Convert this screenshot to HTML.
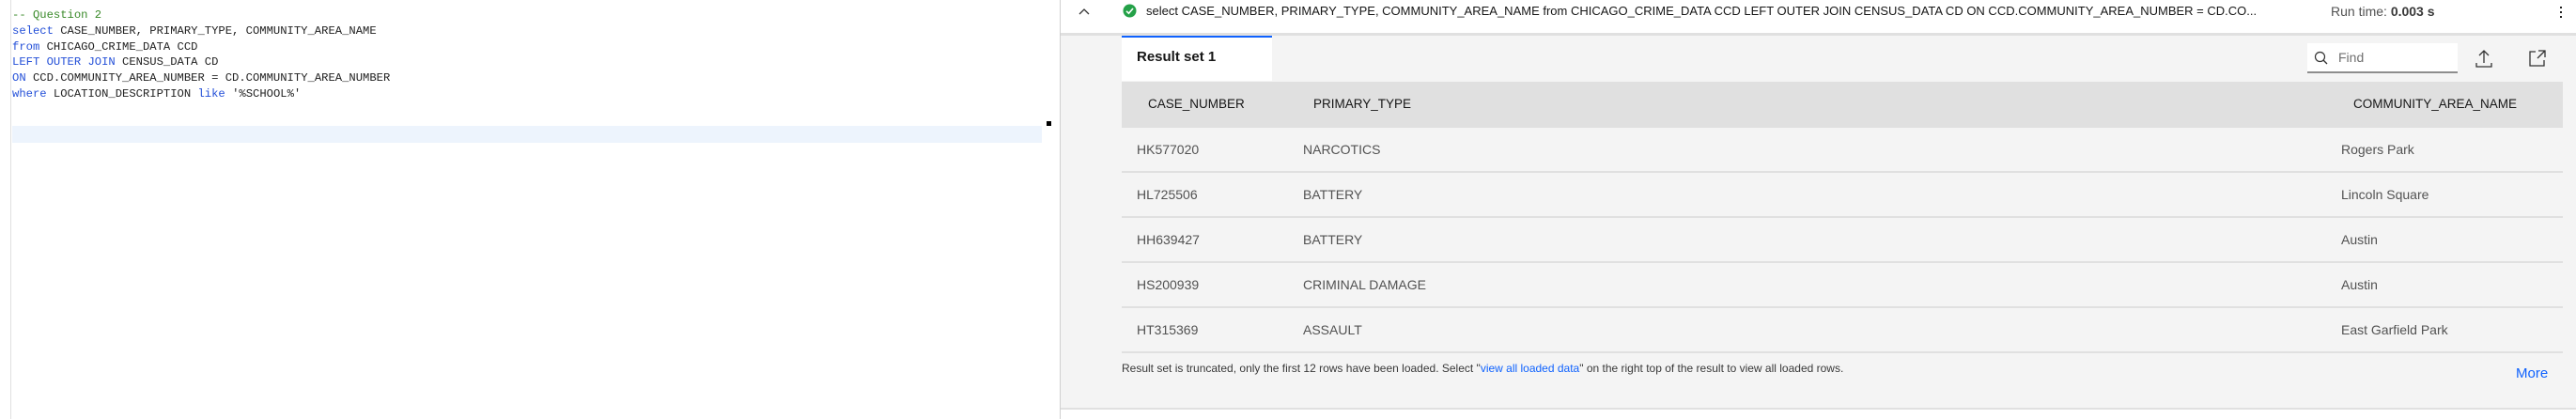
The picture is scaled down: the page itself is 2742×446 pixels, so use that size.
<!DOCTYPE html>
<html><head><meta charset="utf-8"><style>
*{margin:0;padding:0;box-sizing:border-box}
body{width:2742px;height:446px;background:#fff;position:relative;overflow:hidden;font-family:"Liberation Sans",sans-serif;color:#161616}
.a{position:absolute;white-space:nowrap}
.code{font-family:"Liberation Mono",monospace;font-size:12.2px;color:#222;left:13px}
.k{color:#2450d8}.c{color:#3a8a2a}
.t{font-size:14px;color:#525252}
</style></head><body>
<div class="a" style="left:11px;top:0;width:1px;height:446px;background:#e0e0e0"></div>
<div class="a code c" style="top:9px">-- Question 2</div>
<div class="a code" style="top:26px"><span class="k">select</span> CASE_NUMBER, PRIMARY_TYPE, COMMUNITY_AREA_NAME</div>
<div class="a code" style="top:43px"><span class="k">from</span> CHICAGO_CRIME_DATA CCD</div>
<div class="a code" style="top:59px"><span class="k">LEFT OUTER JOIN</span> CENSUS_DATA CD</div>
<div class="a code" style="top:76px"><span class="k">ON</span> CCD.COMMUNITY_AREA_NUMBER = CD.COMMUNITY_AREA_NUMBER</div>
<div class="a code" style="top:93px"><span class="k">where</span> LOCATION_DESCRIPTION <span class="k">like</span> '%SCHOOL%'</div>
<div class="a" style="left:13px;top:134px;width:1096px;height:18px;background:#edf4fd"></div>
<div class="a" style="left:1114px;top:129px;width:5px;height:5px;background:#000"></div>

<div class="a" style="left:1128px;top:0;width:1px;height:446px;background:#d0d0d0"></div>
<div class="a" style="left:1129px;top:35px;width:1613px;height:3px;background:#e0e0e0"></div>
<div class="a" style="left:1129px;top:38px;width:1613px;height:396px;background:#f4f4f4"></div>
<div class="a" style="left:1129px;top:434px;width:1613px;height:2px;background:#e0e0e0"></div>
<svg class="a" style="left:1148px;top:8px" width="12" height="10"><path d="M1 7 L6 2 L11 7" fill="none" stroke="#333" stroke-width="1.3"/></svg>
<svg class="a" style="left:1195px;top:4px" width="15" height="15"><circle cx="7.5" cy="7.5" r="7" fill="#24a148"/><path d="M4 7.8 L6.5 10.2 L11 5" fill="none" stroke="#fff" stroke-width="1.6"/></svg>
<div class="a" style="left:1220px;top:4px;font-size:13px;color:#161616">select CASE_NUMBER, PRIMARY_TYPE, COMMUNITY_AREA_NAME from CHICAGO_CRIME_DATA CCD LEFT OUTER JOIN CENSUS_DATA CD ON CCD.COMMUNITY_AREA_NUMBER = CD.CO...</div>
<div class="a" style="left:2481px;top:4px;font-size:14px;color:#525252">Run time: <b style="color:#393939">0.003 s</b></div>
<div class="a" style="left:2725px;top:7px;width:2px;height:2px;background:#222;box-shadow:0 5px 0 #222,0 10px 0 #222"></div>

<div class="a" style="left:1194px;top:38px;width:160px;height:48px;background:#fff;border-top:2px solid #0f62fe"></div>
<div class="a" style="left:1210px;top:52px;font-size:15px;font-weight:bold">Result set 1</div>
<div class="a" style="left:2456px;top:46px;width:160px;height:32px;background:#fff;border-bottom:2px solid #8d8d8d"></div>
<svg class="a" style="left:2463px;top:54px" width="16" height="16"><circle cx="6.5" cy="6.5" r="5" fill="none" stroke="#333" stroke-width="1.2"/><path d="M10 10 L14 14" stroke="#333" stroke-width="1.3"/></svg>
<div class="a" style="left:2489px;top:53px;font-size:14px;color:#6f6f6f">Find</div>
<svg class="a" style="left:2634px;top:52px" width="20" height="22"><path d="M10 2 V15 M5 7 L10 2 L15 7 M2 15 V19 H18 V15" fill="none" stroke="#333" stroke-width="1.3"/></svg>
<svg class="a" style="left:2691px;top:52px" width="20" height="20"><path d="M8 3 H2 V18 H17 V12 M11 2 H18 V9 M18 2 L10 10" fill="none" stroke="#333" stroke-width="1.3"/></svg>

<div class="a" style="left:1194px;top:87px;width:1534px;height:49px;background:#e0e0e0"></div>
<div class="a" style="left:1222px;top:103px;font-size:13.5px;color:#161616">CASE_NUMBER</div>
<div class="a" style="left:1398px;top:103px;font-size:13.5px;color:#161616">PRIMARY_TYPE</div>
<div class="a" style="left:2505px;top:103px;font-size:13.5px;color:#161616">COMMUNITY_AREA_NAME</div>

<div class="a" style="left:1194px;top:182px;width:1534px;height:2px;background:#e0e0e0"></div>
<div class="a" style="left:1194px;top:230px;width:1534px;height:2px;background:#e0e0e0"></div>
<div class="a" style="left:1194px;top:278px;width:1534px;height:2px;background:#e0e0e0"></div>
<div class="a" style="left:1194px;top:326px;width:1534px;height:2px;background:#e0e0e0"></div>
<div class="a" style="left:1194px;top:374px;width:1534px;height:2px;background:#e0e0e0"></div>

<div class="a t" style="left:1210px;top:151px">HK577020</div><div class="a t" style="left:1387px;top:151px">NARCOTICS</div><div class="a t" style="left:2492px;top:151px">Rogers Park</div>
<div class="a t" style="left:1210px;top:199px">HL725506</div><div class="a t" style="left:1387px;top:199px">BATTERY</div><div class="a t" style="left:2492px;top:199px">Lincoln Square</div>
<div class="a t" style="left:1210px;top:247px">HH639427</div><div class="a t" style="left:1387px;top:247px">BATTERY</div><div class="a t" style="left:2492px;top:247px">Austin</div>
<div class="a t" style="left:1210px;top:295px">HS200939</div><div class="a t" style="left:1387px;top:295px">CRIMINAL DAMAGE</div><div class="a t" style="left:2492px;top:295px">Austin</div>
<div class="a t" style="left:1210px;top:343px">HT315369</div><div class="a t" style="left:1387px;top:343px">ASSAULT</div><div class="a t" style="left:2492px;top:343px">East Garfield Park</div>

<div class="a" style="left:1194px;top:385px;font-size:12px;color:#393939">Result set is truncated, only the first 12 rows have been loaded. Select "<span style="color:#0f62fe">view all loaded data</span>" on the right top of the result to view all loaded rows.</div>
<div class="a" style="left:2678px;top:389px;font-size:15px;color:#0f62fe">More</div>
</body></html>
